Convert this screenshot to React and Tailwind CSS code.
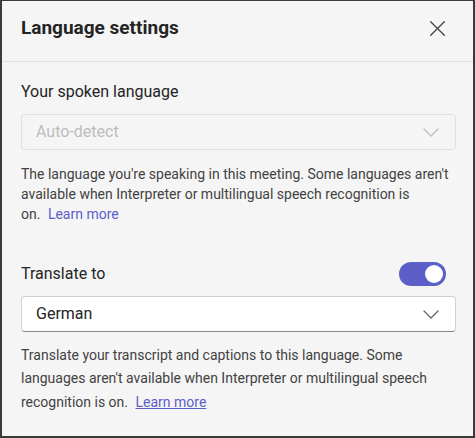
import React from "react";

function Chevron({ color }) {
  return (
    <svg width="16" height="9" viewBox="0 0 16 9" fill="none" className="shrink-0">
      <path d="M1 1 L8 8 L15 1" stroke={color} strokeWidth="1.2" strokeLinecap="round" strokeLinejoin="round" />
    </svg>
  );
}

export default function App() {
  return (
    <div className="h-[438px] w-[475px] overflow-hidden border-x-2 border-t border-b-2 border-[#3b3b3b] bg-[#f5f5f5] font-['Roboto','Liberation_Sans',sans-serif] text-[#242424]">
      <div className="h-[61px] border-b border-[#e0e0e0] pl-[19px] pr-[28px] pt-[14px]">
        <div className="flex h-[26px] items-center justify-between">
          <h1 className="text-[19px] font-bold leading-[26px] text-[#242424]">Language settings</h1>
          <svg width="15" height="15" viewBox="0 0 15 15" fill="none">
            <path d="M0.7 0.7 L14.3 14.3 M14.3 0.7 L0.7 14.3" stroke="#424242" strokeWidth="1.3" strokeLinecap="round" />
          </svg>
        </div>
      </div>

      <div className="flex flex-col pl-[19px] pr-[17px] pt-[19px]">
        <div className="text-[16px] leading-[22px] text-[#242424]">Your spoken language</div>
        <div className="mt-[11px] flex h-[36px] items-center justify-between rounded-[4px] border border-[#e0e0e0] bg-[#f5f5f5] pl-[14px] pr-[16px]">
          <span className="text-[16px] leading-[22px] text-[#bdbdbd]">Auto-detect</span>
          <Chevron color="#bdbdbd" />
        </div>
        <p className="mt-[14px] text-[14px] leading-[20px] text-[#424242]">
          <span className="block whitespace-nowrap">The language you're speaking in this meeting. Some languages aren't</span>
          <span className="block whitespace-nowrap">available when Interpreter or multilingual speech recognition is</span>
          <span className="block whitespace-nowrap">
            on. <a className="ml-[4px] text-[#5b5fc7]">Learn more</a>
          </span>
        </p>

        <div className="mt-[38px] flex h-6 items-center justify-between pr-[10px]">
          <span className="text-[16px] leading-[22px] text-[#242424]">Translate to</span>
          <div className="flex h-6 w-[47px] items-center justify-end rounded-full bg-[#5b5fc7] pr-[3px]">
            <div className="h-[18px] w-[18px] rounded-full bg-white" />
          </div>
        </div>
        <div className="mt-[10px] flex h-[36px] items-center justify-between rounded-[4px] border border-[#d1d1d1] border-b-[#8a8a8a] bg-white pl-[14px] pr-[16px]">
          <span className="text-[16px] leading-[22px] text-[#242424]">German</span>
          <Chevron color="#616161" />
        </div>
        <p className="mt-[12px] text-[14px] leading-[23.3px] text-[#424242]">
          <span className="block whitespace-nowrap">Translate your transcript and captions to this language. Some</span>
          <span className="block whitespace-nowrap">languages aren't available when Interpreter or multilingual speech</span>
          <span className="block whitespace-nowrap">
            recognition is on. <a className="ml-[4px] text-[#5b5fc7] underline">Learn more</a>
          </span>
        </p>
      </div>
    </div>
  );
}
